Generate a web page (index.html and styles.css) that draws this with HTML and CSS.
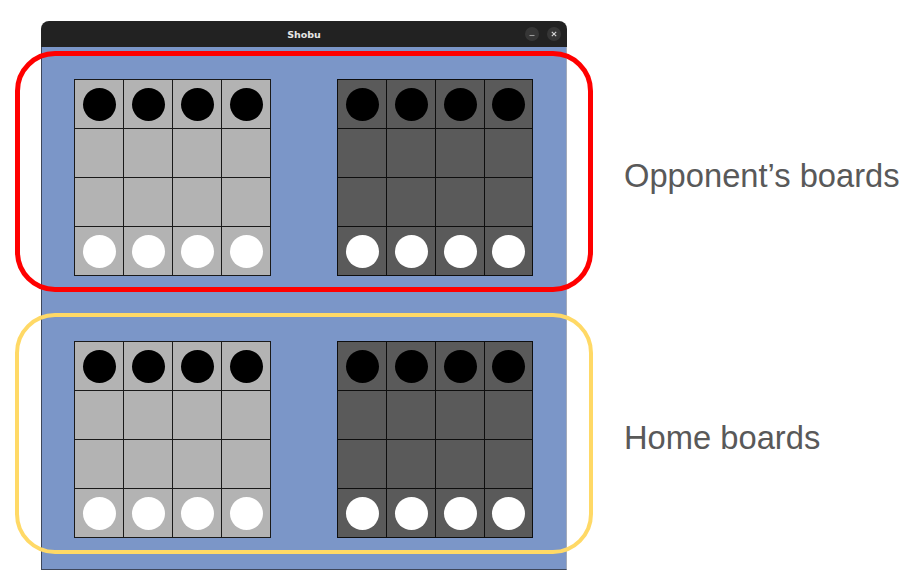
FILE: index.html
```html
<!DOCTYPE html>
<html lang="en">
<head>
  <meta charset="UTF-8">
  <meta name="viewport" content="width=device-width, initial-scale=1.0">
  <title>Shobu boards</title>
  <link rel="stylesheet" href="styles.css">
</head>
<body>
  <div class="stage">
    <div class="window">
      <div class="titlebar">
        <span class="title">Shobu</span>
        <div class="controls">
          <span class="ctl" aria-label="Minimize">
            <svg viewBox="0 0 14 14"><path d="M4.5 8.5h5" /></svg>
          </span>
          <span class="ctl" aria-label="Close">
            <svg viewBox="0 0 14 14"><path d="M4.8 4.8l4.4 4.4M9.2 4.8l-4.4 4.4" /></svg>
          </span>
        </div>
      </div>
      <div class="table">
        <div class="board light">
          <div class="cell"><span class="stone black"></span></div>
          <div class="cell"><span class="stone black"></span></div>
          <div class="cell"><span class="stone black"></span></div>
          <div class="cell"><span class="stone black"></span></div>
          <div class="cell"></div><div class="cell"></div><div class="cell"></div><div class="cell"></div>
          <div class="cell"></div><div class="cell"></div><div class="cell"></div><div class="cell"></div>
          <div class="cell"><span class="stone white"></span></div>
          <div class="cell"><span class="stone white"></span></div>
          <div class="cell"><span class="stone white"></span></div>
          <div class="cell"><span class="stone white"></span></div>
        </div>
        <div class="board dark">
          <div class="cell"><span class="stone black"></span></div>
          <div class="cell"><span class="stone black"></span></div>
          <div class="cell"><span class="stone black"></span></div>
          <div class="cell"><span class="stone black"></span></div>
          <div class="cell"></div><div class="cell"></div><div class="cell"></div><div class="cell"></div>
          <div class="cell"></div><div class="cell"></div><div class="cell"></div><div class="cell"></div>
          <div class="cell"><span class="stone white"></span></div>
          <div class="cell"><span class="stone white"></span></div>
          <div class="cell"><span class="stone white"></span></div>
          <div class="cell"><span class="stone white"></span></div>
        </div>
        <div class="board light">
          <div class="cell"><span class="stone black"></span></div>
          <div class="cell"><span class="stone black"></span></div>
          <div class="cell"><span class="stone black"></span></div>
          <div class="cell"><span class="stone black"></span></div>
          <div class="cell"></div><div class="cell"></div><div class="cell"></div><div class="cell"></div>
          <div class="cell"></div><div class="cell"></div><div class="cell"></div><div class="cell"></div>
          <div class="cell"><span class="stone white"></span></div>
          <div class="cell"><span class="stone white"></span></div>
          <div class="cell"><span class="stone white"></span></div>
          <div class="cell"><span class="stone white"></span></div>
        </div>
        <div class="board dark">
          <div class="cell"><span class="stone black"></span></div>
          <div class="cell"><span class="stone black"></span></div>
          <div class="cell"><span class="stone black"></span></div>
          <div class="cell"><span class="stone black"></span></div>
          <div class="cell"></div><div class="cell"></div><div class="cell"></div><div class="cell"></div>
          <div class="cell"></div><div class="cell"></div><div class="cell"></div><div class="cell"></div>
          <div class="cell"><span class="stone white"></span></div>
          <div class="cell"><span class="stone white"></span></div>
          <div class="cell"><span class="stone white"></span></div>
          <div class="cell"><span class="stone white"></span></div>
        </div>
      </div>
    </div>

    <div class="labels">
      <p class="label">Opponent’s boards</p>
      <p class="label">Home boards</p>
    </div>

    <div class="frame frame-opponent"></div>
    <div class="frame frame-home"></div>
  </div>
</body>
</html>
```

FILE: styles.css
```css
body {
  margin: 0;
  background: #ffffff;
  font-family: "Liberation Sans", Arial, sans-serif;
}
.stage {
  position: relative;
  display: flex;
  align-items: flex-start;
  gap: 57px;
  padding: 21px 0 0 41px;
}
.window {
  width: 526px;
  display: flex;
  flex-direction: column;
}
.titlebar {
  height: 26px;
  background: #222222;
  border-radius: 8px 8px 0 0;
  display: grid;
  grid-template-columns: 1fr auto 1fr;
  align-items: center;
}
.title {
  grid-column: 2;
  font-family: "DejaVu Sans", sans-serif;
  font-weight: bold;
  font-size: 9.5px;
  color: #e6e6e6;
  padding-top: 1px;
}
.controls {
  grid-column: 3;
  justify-self: end;
  display: flex;
  gap: 8px;
  padding-right: 6px;
}
.ctl {
  width: 14px;
  height: 14px;
  border-radius: 50%;
  background: #363636;
  display: flex;
}
.ctl svg {
  width: 14px;
  height: 14px;
  fill: none;
  stroke: #d8d8d8;
  stroke-width: 1.1;
}
.ctl:first-child svg {
  stroke: #9a9a9a;
}
.table {
  background: #7b96c8;
  border-left: 1px solid #3e475b;
  border-bottom: 1px solid #3e475b;
  border-right: 1px solid #a3abbb;
  padding: 32px 32px 31px 32px;
  display: grid;
  grid-template-columns: 197px 196px;
  grid-template-rows: 197px 197px;
  column-gap: 66px;
  row-gap: 65px;
}
.board {
  background: #0e0e0e;
  padding: 1px;
  display: grid;
  grid-template-columns: repeat(4, 48px);
  grid-template-rows: repeat(4, 48px);
  gap: 1px;
}
.board.light {
  background: #1a1a1a;
}
.board.dark {
  grid-template-columns: 48px 48px 48px 47px;
}
.light .cell {
  background: #b3b3b3;
}
.dark .cell {
  background: #5a5a5a;
}
.cell {
  display: flex;
  align-items: center;
  justify-content: center;
}
.stone {
  width: 33px;
  height: 33px;
  border-radius: 50%;
}
.stone.black {
  background: #000000;
}
.stone.white {
  background: #ffffff;
}
.labels {
  display: flex;
  flex-direction: column;
  gap: 228px;
  padding-top: 138px;
}
.label {
  margin: 0;
  font-size: 32.7px;
  line-height: 34px;
  color: #595959;
  white-space: nowrap;
}
.frame {
  position: absolute;
  left: 15px;
  width: 578px;
  height: 241px;
  box-sizing: border-box;
  border-radius: 40px;
  pointer-events: none;
}
.frame-opponent {
  top: 51px;
  border: 5px solid #ff0000;
}
.frame-home {
  top: 313px;
  border: 4px solid #ffd966;
}
```
